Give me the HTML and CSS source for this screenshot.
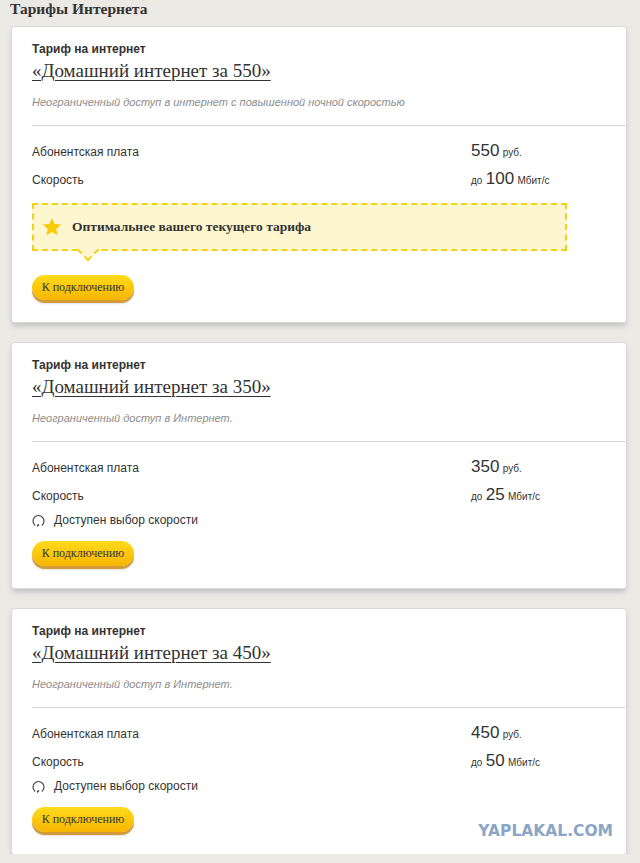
FILE: index.html
```html
<!DOCTYPE html>
<html lang="ru">
<head>
<meta charset="utf-8">
<title>Тарифы Интернета</title>
<link rel="stylesheet" href="styles.css">
</head>
<body>
<h1 class="page-title">Тарифы Интернета</h1>
<div class="cards">
  <div class="card">
    <div class="card-label">Тариф на интернет</div>
    <a class="card-title" href="#">«Домашний интернет за 550»</a>
    <div class="card-desc">Неограниченный доступ в интернет с повышенной ночной скоростью</div>
    <div class="divider"></div>
    <div class="rows">
      <div class="row-name">Абонентская плата</div>
      <div class="row-val"><span class="big">550</span> <span class="small">руб.</span></div>
      <div class="row-name">Скорость</div>
      <div class="row-val"><span class="small">до</span> <span class="big">100</span> <span class="small">Мбит/с</span></div>
    </div>
    <div class="notice">
      <svg class="star" width="20" height="20" viewBox="0 0 24 24"><path d="M12 1.2l3.1 7.3 7.9.6-6 5.2 1.9 7.7L12 17.9l-6.9 4.1 1.9-7.7-6-5.2 7.9-.6z" fill="#f7cb0c"/></svg>
      <span class="notice-text">Оптимальнее вашего текущего тарифа</span>
      <span class="notice-tail"></span>
    </div>
    <a class="btn" href="#">К подключению</a>
  </div>

  <div class="card">
    <div class="card-label">Тариф на интернет</div>
    <a class="card-title" href="#">«Домашний интернет за 350»</a>
    <div class="card-desc">Неограниченный доступ в Интернет.</div>
    <div class="divider"></div>
    <div class="rows">
      <div class="row-name">Абонентская плата</div>
      <div class="row-val"><span class="big">350</span> <span class="small">руб.</span></div>
      <div class="row-name">Скорость</div>
      <div class="row-val"><span class="small">до</span> <span class="big">25</span> <span class="small">Мбит/с</span></div>
    </div>
    <div class="speed">
      <svg class="speed-icon" width="13" height="13" viewBox="0 0 13 13"><path d="M3.2 11.4A5.5 5.5 0 1 1 9.8 11.4" fill="none" stroke="#444" stroke-width="1.2"/><path d="M6.5 10.8L5.6 11.8" stroke="#444" stroke-width="1.6" stroke-linecap="round"/></svg>
      <span>Доступен выбор скорости</span>
    </div>
    <a class="btn" href="#">К подключению</a>
  </div>

  <div class="card">
    <div class="card-label">Тариф на интернет</div>
    <a class="card-title" href="#">«Домашний интернет за 450»</a>
    <div class="card-desc">Неограниченный доступ в Интернет.</div>
    <div class="divider"></div>
    <div class="rows">
      <div class="row-name">Абонентская плата</div>
      <div class="row-val"><span class="big">450</span> <span class="small">руб.</span></div>
      <div class="row-name">Скорость</div>
      <div class="row-val"><span class="small">до</span> <span class="big">50</span> <span class="small">Мбит/с</span></div>
    </div>
    <div class="speed">
      <svg class="speed-icon" width="13" height="13" viewBox="0 0 13 13"><path d="M3.2 11.4A5.5 5.5 0 1 1 9.8 11.4" fill="none" stroke="#444" stroke-width="1.2"/><path d="M6.5 10.8L5.6 11.8" stroke="#444" stroke-width="1.6" stroke-linecap="round"/></svg>
      <span>Доступен выбор скорости</span>
    </div>
    <a class="btn" href="#">К подключению</a>
    <div class="watermark">YAPLAKAL.COM</div>
  </div>
</div>
</body>
</html>
```

FILE: styles.css
```css
html, body {
  margin: 0;
  padding: 0;
  background: #ebe9e4;
}
body {
  font-family: "Liberation Sans", Arial, sans-serif;
  color: #333;
}
.page-title {
  margin: 0 0 9px 0;
  padding-left: 10px;
  font-family: "Liberation Serif", serif;
  font-weight: bold;
  font-size: 15.5px;
  line-height: 18px;
  color: #333;
}
.cards {
  display: flex;
  flex-direction: column;
  gap: 21px;
  padding: 0 14px 0 12px;
}
.card {
  position: relative;
  background: #fff;
  border-radius: 3px;
  box-shadow: 0 0 0 1px #dcdad5, 0 4px 5px rgba(90, 95, 120, 0.28);
  padding: 14px 0 19px 20px;
  display: flex;
  flex-direction: column;
  align-items: flex-start;
}
.card-label {
  font-size: 12px;
  font-weight: bold;
  line-height: 16px;
  color: #333;
}
.card-title {
  margin-top: 2px;
  font-family: "Liberation Serif", serif;
  font-size: 19px;
  line-height: 24px;
  color: #333;
  text-decoration: underline;
  text-decoration-thickness: 1px;
  text-underline-offset: 3px;
}
.card-desc {
  margin-top: 12px;
  font-size: 11px;
  line-height: 14px;
  font-style: italic;
  color: #8c8c8c;
}
.divider {
  align-self: stretch;
  margin-top: 16px;
  height: 1px;
  background: #d6d6d6;
}
.rows {
  margin-top: 16px;
  display: grid;
  grid-template-columns: 439px auto;
  grid-auto-rows: 20px;
  row-gap: 8px;
  font-size: 12px;
  line-height: 20px;
}
.row-name,
.row-val {
  height: 20px;
  white-space: nowrap;
}
.big {
  font-size: 17px;
  line-height: 1;
}
.small {
  font-size: 10px;
  line-height: 1;
}
.notice {
  position: relative;
  margin-top: 13px;
  margin-bottom: 24px;
  box-sizing: border-box;
  width: 535px;
  height: 48px;
  border: 2px dashed #f3d31a;
  background: #fdf6cf;
  display: flex;
  align-items: center;
  gap: 10px;
  padding-left: 8px;
}
.star {
  display: block;
}
.notice-text {
  font-family: "Liberation Serif", serif;
  font-weight: bold;
  font-size: 13.5px;
  color: #333;
}
.notice-tail {
  position: absolute;
  left: 46px;
  bottom: -9px;
  box-sizing: border-box;
  width: 16px;
  height: 16px;
  background: #fdf6cf;
  border-right: 2px dashed #f3d31a;
  border-bottom: 2px dashed #f3d31a;
  transform: rotate(45deg);
}
.btn {
  display: inline-flex;
  align-items: center;
  justify-content: center;
  width: 102px;
  height: 25px;
  border-radius: 13px;
  background: linear-gradient(#ffdb1c, #f7b500);
  box-shadow: 0 3px 0 #d49a3a, 0 4px 2px rgba(0, 0, 0, 0.12);
  font-family: "Liberation Serif", serif;
  font-size: 12px;
  color: #333;
  text-decoration: none;
  margin-bottom: 3px;
}
.speed {
  margin-top: 4px;
  margin-bottom: 11px;
  display: flex;
  align-items: center;
  gap: 9px;
  font-size: 12px;
  line-height: 20px;
}
.speed-icon {
  display: block;
}
.watermark {
  position: absolute;
  right: 13px;
  bottom: 14px;
  font-family: "DejaVu Sans", sans-serif;
  font-weight: bold;
  font-size: 15.5px;
  color: #8aa6c4;
}
```
